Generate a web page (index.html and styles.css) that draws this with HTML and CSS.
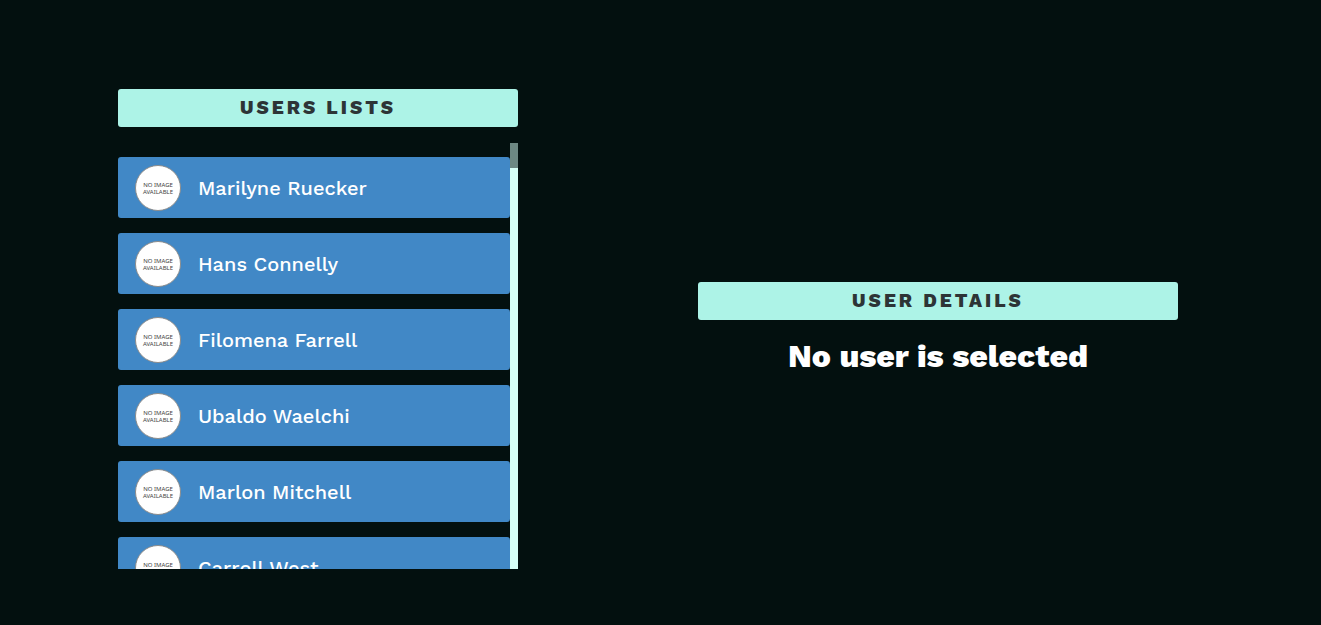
FILE: index.html
```html
<!DOCTYPE html>
<html lang="en">
<head>
<meta charset="utf-8">
<meta name="viewport" content="width=device-width, initial-scale=1">
<title>Users</title>
<link rel="stylesheet" href="styles.css">
</head>
<body>
<main class="page">
  <section class="users">
    <h2 class="title">USERS LISTS</h2>
    <div class="scroller">
      <ul class="list">
        <li><button class="user" type="button"><span class="avatar">NO IMAGE<br>AVAILABLE</span>Marilyne Ruecker</button></li>
        <li><button class="user" type="button"><span class="avatar">NO IMAGE<br>AVAILABLE</span>Hans Connelly</button></li>
        <li><button class="user" type="button"><span class="avatar">NO IMAGE<br>AVAILABLE</span>Filomena Farrell</button></li>
        <li><button class="user" type="button"><span class="avatar">NO IMAGE<br>AVAILABLE</span>Ubaldo Waelchi</button></li>
        <li><button class="user" type="button"><span class="avatar">NO IMAGE<br>AVAILABLE</span>Marlon Mitchell</button></li>
        <li><button class="user" type="button"><span class="avatar">NO IMAGE<br>AVAILABLE</span>Carroll West</button></li>
      </ul>
      <div class="track"><div class="thumb"></div></div>
    </div>
  </section>
  <section class="details">
    <h2 class="title">USER DETAILS</h2>
    <p class="empty">No user is selected</p>
  </section>
</main>
</body>
</html>
```
FILE: styles.css
```css
* {
  box-sizing: border-box;
  margin: 0;
  padding: 0;
}

body {
  background: #03100f;
  color: #fff;
  font-family: "Work Sans", Inter, "Noto Sans", sans-serif;
}

.page {
  display: flex;
  justify-content: center;
  align-items: center;
  gap: 180px;
  min-height: 100vh;
  padding: 33px 25px 0 0;
}

.users {
  display: flex;
  flex-direction: column;
  gap: 16px;
  flex: 0 1 400px;
  height: 480px;
}

.details {
  flex: 0 1 480px;
}

.title {
  padding: 7px;
  border-radius: 3px;
  background: #adf3e7;
  color: #2d3436;
  font-size: 19px;
  line-height: 24px;
  font-weight: 800;
  letter-spacing: 3px;
  text-align: center;
}

.scroller {
  display: flex;
  flex: 1;
  min-height: 0;
}

.list {
  flex: 1;
  padding-top: 14px;
  overflow-y: auto;
  scrollbar-width: none;
  list-style: none;
}

.user {
  display: flex;
  align-items: center;
  gap: 17px;
  width: 100%;
  height: 61px;
  margin-bottom: 15px;
  padding: 0 17px;
  border: 0;
  border-radius: 3px;
  background: #4188c6;
  color: #fff;
  font: inherit;
  font-size: 20px;
  font-weight: 500;
  text-align: left;
}

.avatar {
  flex: none;
  width: 46px;
  height: 46px;
  padding-top: 16px;
  border: 1px solid #8c8c8c;
  border-radius: 50%;
  background: #fff;
  color: #444;
  font-family: "Noto Sans", sans-serif;
  font-size: 6px;
  line-height: 7px;
  font-weight: 400;
  text-align: center;
  white-space: nowrap;
}

.track {
  width: 8px;
  background: #d6fff6;
}

.thumb {
  height: 25px;
  background: #6d8883;
}

.empty {
  padding-top: 16px;
  font-size: 32px;
  line-height: 40px;
  font-weight: 800;
  text-align: center;
}
```
